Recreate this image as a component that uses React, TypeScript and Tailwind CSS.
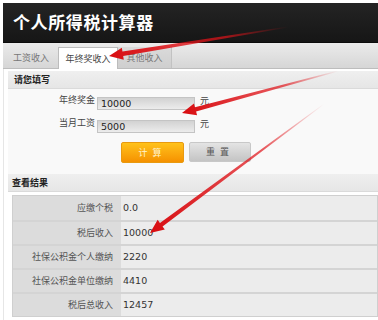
import React from 'react';

// Red annotation arrows drawn over the screenshot
type Pt = [number, number];

const arrowPoints = (tail: Pt, tip: Pt) => {
  const dx = tip[0] - tail[0];
  const dy = tip[1] - tail[1];
  const len = Math.hypot(dx, dy);
  const ux = dx / len;
  const uy = dy / len;
  const nx = -uy;
  const ny = ux;
  const headLen = 14;
  const headW = 6;
  const bx = tip[0] - ux * headLen;
  const by = tip[1] - uy * headLen;
  const pts: Pt[] = [
    [tail[0] + nx * 0.4, tail[1] + ny * 0.4],
    [bx + nx * 2.2, by + ny * 2.2],
    [bx + nx * headW, by + ny * headW],
    tip,
    [bx - nx * headW, by - ny * headW],
    [bx - nx * 2.2, by - ny * 2.2],
    [tail[0] - nx * 0.4, tail[1] - ny * 0.4],
  ];
  return pts.map((p) => p.join(',')).join(' ');
};

const arrows: { id: string; tail: Pt; tip: Pt }[] = [
  { id: 'a1', tail: [288, 27], tip: [109, 56] },
  { id: 'a2', tail: [338, 71], tip: [182, 113] },
  { id: 'a3', tail: [324, 104], tip: [150, 233] },
];

const Arrows: React.FC = () => (
  <svg className="absolute inset-0 pointer-events-none" width="378" height="320" viewBox="0 0 378 320">
    <defs>
      {arrows.map((a) => (
        <linearGradient
          key={a.id}
          id={a.id}
          gradientUnits="userSpaceOnUse"
          x1={a.tail[0]}
          y1={a.tail[1]}
          x2={a.tip[0]}
          y2={a.tip[1]}
        >
          <stop offset="0" stopColor="#e0141a" stopOpacity="0" />
          <stop offset="0.35" stopColor="#e0141a" stopOpacity="0.7" />
          <stop offset="1" stopColor="#d80c10" stopOpacity="1" />
        </linearGradient>
      ))}
    </defs>
    {arrows.map((a) => (
      <polygon key={a.id} points={arrowPoints(a.tail, a.tip)} fill={`url(#${a.id})`} />
    ))}
  </svg>
);

const results = [
  { label: '应缴个税', value: '0.0' },
  { label: '税后收入', value: '10000' },
  { label: '社保公积金个人缴纳', value: '2220' },
  { label: '社保公积金单位缴纳', value: '4410' },
  { label: '税后总收入', value: '12457' },
];

const cjk = "font-['Noto_Sans_CJK_SC',sans-serif]";
const num = "font-['DejaVu_Sans','Noto_Sans_CJK_SC',sans-serif]";

const FormRow: React.FC<{ label: string; value: string }> = ({ label, value }) => (
  <div className="flex items-start h-[12px]">
    <span className={`w-[89px] text-right pr-[2px] text-[9px] leading-[10px] text-[#444] -mt-[2px] ${cjk}`}>{label}</span>
    <div className="w-[98px] h-[13px] border border-[#c4c4c4] bg-gradient-to-b from-[#d2d2d2] to-[#ececec] flex items-center pl-[3px]">
      <span className={`text-[9.5px] text-[#222] mt-[2px] ${num}`}>{value}</span>
    </div>
    <span className={`ml-[5px] text-[9px] leading-[10px] text-[#444] -mt-[1px] ${cjk}`}>元</span>
  </div>
);

const App: React.FC = () => {
  return (
    <div className="relative w-[378px] h-[320px] overflow-hidden bg-white pt-[3px] pl-[3px]">
      {/* Header */}
      <div className="h-[40px] bg-gradient-to-b from-[#242424] to-[#161616] border-b border-[#0c0c0c] flex items-center pl-[10px]">
        <h1 className={`text-[17px] font-bold text-white tracking-[0.6px] -mt-[2px] ${cjk}`}>个人所得税计算器</h1>
      </div>

      {/* Tabs */}
      <div className="h-[26px] bg-gradient-to-b from-[#ebebeb] to-[#d6d6d6] border-b border-[#bdbdbd] flex items-end">
        <div className={`w-[55px] h-[21px] pl-[10px] flex items-center text-[9px] text-[#777] ${cjk}`}>工资收入</div>
        <div className={`w-[60px] h-[22px] -mb-px bg-white border border-b-0 border-[#bcbcbc] flex items-center justify-center text-[9px] text-[#444] ${cjk}`}>年终奖收入</div>
        <div className={`w-[54px] h-[21px] bg-gradient-to-b from-[#dadada] to-[#cfcfcf] border-r border-[#c2c2c2] flex items-center justify-center text-[9px] text-[#777] ${cjk}`}>其他收入</div>
      </div>

      {/* Content */}
      <div className="h-[260px] border-l border-[#e6e6e6] pl-[4px] pt-[2px] bg-white">
        {/* Input section */}
        <div className={`h-[18px] bg-gradient-to-b from-[#efefef] to-[#e6e6e6] border-b border-[#dadada] flex items-center pl-[6px] text-[9px] font-bold text-[#222] ${cjk}`}>
          请您填写
        </div>
        <div className="h-[85px] bg-[#f9f9f9] pt-[8px] flex flex-col gap-[11px]">
          <FormRow label="年终奖金" value="10000" />
          <FormRow label="当月工资" value="5000" />
          <div className="flex gap-[5px] pl-[113px] mt-[-1px]">
            <button className={`w-[63px] h-[21px] rounded-[2px] border border-[#e89a10] bg-gradient-to-b from-[#ffc21a] to-[#f59100] text-[9px] text-[#fff3d0] tracking-[5px] ${cjk}`}>
              计算
            </button>
            <button className={`w-[62px] h-[20px] rounded-[2px] border border-[#c8c8c8] bg-gradient-to-b from-[#e4e4e4] to-[#c4c4c4] text-[9px] text-[#555] tracking-[5px] ${cjk}`}>
              重置
            </button>
          </div>
        </div>

        {/* Result section */}
        <div className={`h-[18px] bg-gradient-to-b from-[#efefef] to-[#e6e6e6] border-b border-[#dadada] flex items-center pl-[4px] text-[9px] font-bold text-[#222] ${cjk}`}>
          查看结果
        </div>
        <div className="pl-[4px] pt-[3px]">
          <div className="border border-[#cfcfcf] bg-[#ececec]">
            {results.map((r, i) => (
              <div key={r.label} className={`flex h-[24px] ${i > 0 ? 'border-t-2 border-[#d4d4d4]' : ''}`}>
                <div className={`w-[108px] bg-[#dcdcdc] flex items-center justify-end pr-[8px] text-[9px] text-[#555] ${cjk}`}>
                  {r.label}
                </div>
                <div className={`flex items-center pl-[2px] text-[9.5px] text-[#333] ${num}`}>{r.value}</div>
              </div>
            ))}
          </div>
        </div>
      </div>

      <Arrows />
    </div>
  );
};

export default App;
